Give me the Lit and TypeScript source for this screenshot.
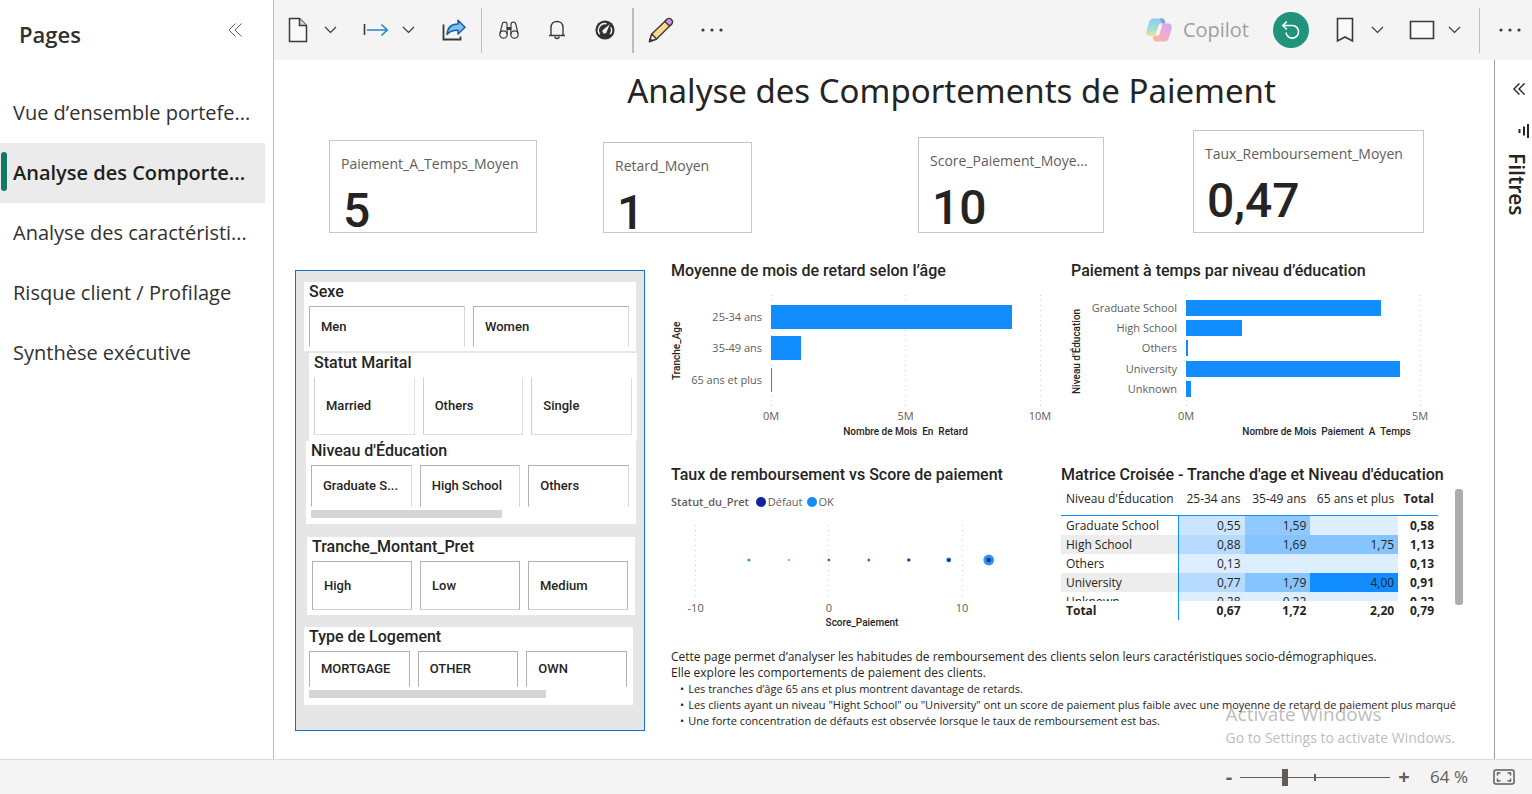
import { LitElement, html, svg, css, nothing } from "lit";
import { customElement, property, state } from "lit/decorators.js";
import { classMap } from "lit/directives/class-map.js";

const SANS = css`"Open Sans", "Noto Sans", sans-serif`;
const DIN = css`Roboto, "Open Sans", sans-serif`;

/* ---------- icons ---------- */

const chevron = html`<svg width="13" height="8" viewBox="0 0 13 8" fill="none" stroke="#3b3a39" stroke-width="1.2"><path d="M1 1 6.5 6.5 12 1" /></svg>`;

const fileIcon = html`<svg width="20" height="26" viewBox="0 0 20 26" fill="#fafafa" stroke="#3b3a39" stroke-width="1.5">
  <path d="M1.5 1.5H11.5L18.5 8.5V24.5H1.5Z" /><path d="M11.5 1.5V8.5H18.5" fill="#d8d8d8" /></svg>`;

const arrowIcon = html`<svg width="26" height="14" viewBox="0 0 26 14" fill="none" stroke="#1e88c9" stroke-width="1.6">
  <path d="M1.5 1V12" stroke="#3b3a39" /><path d="M4 7H24M18.5 1.5 24.2 7 18.5 12.5" /></svg>`;

const shareIcon = html`<svg width="24" height="22" viewBox="0 0 24 22" fill="none">
  <path d="M1.5 5.5V20.5H18.5V17.5" stroke="#3b3a39" stroke-width="1.8" />
  <path d="M5 15.5C5.5 8.5 9.5 5 16 5V1.3L23 8.2 16 15V11.2C11 11 7.800 12 5 15.5Z" fill="#83beec" stroke="#1160a8" stroke-width="1.5" stroke-linejoin="round" /></svg>`;

const binocularsIcon = html`<svg width="20" height="18" viewBox="0 0 20 18" fill="none" stroke="#3b3a39" stroke-width="1.2">
  <circle cx="4.500" cy="13.500" r="3.700" /><circle cx="15.500" cy="13.500" r="3.700" />
  <path d="M1 12.500 3.300 2.800C3.700.5 7.700.5 8 2.800L8.200 13.500M19 12.500 16.700 2.800C16.300.5 12.300.5 12 2.800L11.800 13.500" />
  <path d="M8.300 6.500H11.700V8.500H8.300Z" fill="#3b3a39" /></svg>`;

const bellIcon = html`<svg width="18" height="20" viewBox="0 0 18 20" fill="none" stroke="#3b3a39" stroke-width="1.4">
  <path d="M1 15.5H17M3 15.3V7.5C3 3.8 5.5 1.5 9 1.5S15 3.8 15 7.5V15.3" /><path d="M6.8 16.5C7 19.2 11 19.2 11.2 16.5" /></svg>`;

const gaugeIcon = html`<svg width="20" height="20" viewBox="0 0 20 20" fill="none">
  <circle cx="10" cy="10" r="9.6" fill="#323130" />
  <path d="M4.8 14.2A6.6 6.6 0 0 1 11.5 3.7M15.8 7.2A6.6 6.6 0 0 1 15.2 14.2" stroke="#f4f4f4" stroke-width="1.4" />
  <path d="M14.8 4.2 11.8 11.6A2.2 2.2 0 1 1 8.4 9.5Z" fill="#f4f4f4" /></svg>`;

const pencilIcon = html`<svg width="26" height="26" viewBox="0 0 26 26" stroke="#3b3a39" stroke-width="1.4" stroke-linejoin="round">
  <path d="M1.5 24.5 3.8 17 18.8 2.5 23.5 7.2 8.5 22Z" fill="#ffd987" />
  <path d="M1.5 24.5 3.8 17 8.5 22Z" fill="#fff" />
  <path d="M16.8 4.5 19 2.3C20.3 1 22 1 23.4 2.5S25 5.5 23.7 6.9L21.5 9.1Z" fill="#d893dc" />
  <path d="M1.5 24.5 2.3 21.8 4 23.7Z" fill="#3b3a39" /></svg>`;

const dotsIcon = html`<svg width="24" height="6" viewBox="0 0 24 6" fill="#3b3a39"><circle cx="3" cy="3" r="1.6" /><circle cx="12" cy="3" r="1.6" /><circle cx="21" cy="3" r="1.6" /></svg>`;

const copilotIcon = html`<svg width="26" height="24" viewBox="0 0 26 24">
  <defs>
    <linearGradient id="cl" x1="0" y1="0" x2="0" y2="1"><stop offset="0" stop-color="#8ccbf3" /><stop offset=".55" stop-color="#9fdfd4" /><stop offset="1" stop-color="#f0e58d" /></linearGradient>
    <linearGradient id="cr" x1="1" y1="0" x2="0" y2="1"><stop offset="0" stop-color="#c9a8f0" /><stop offset=".5" stop-color="#f0abd2" /><stop offset="1" stop-color="#fbb795" /></linearGradient>
  </defs>
  <path d="M7.5.5H16C18.5.5 18.5 3 19.3 5.5H15.5C13 5.5 12.3 8 11.5 11L10 15.5C9.2 17.5 8 18.3 6 18.3H4C.5 18.3-.3 15.5.6 12.5L3.2 4C4 1.5 5 .5 7.5.5Z" fill="url(#cl)" />
  <path d="M14 .5H16.2C18.5.5 18.8 3 19.5 5.5H17C15.2 5.5 14.8 2.5 14 .5Z" fill="#7d9fe8" />
  <path d="M18.5 23.5H10C7.5 23.5 7.3 21 6.7 18.5C9.5 18.3 10.3 17.5 11 15.5L13.5 8C14.2 6 15.5 5.6 17.5 5.6H22C25.5 5.6 26.3 8.5 25.4 11.5L22.8 20C22 22.5 21 23.5 18.5 23.5Z" fill="url(#cr)" />
  <path d="M13.2 6.5H16.5L13 17.5H9.8Z" fill="#f7f4f8" /></svg>`;

const resetIcon = html`<svg width="20" height="20" viewBox="0 0 20 20" fill="none" stroke="#fff" stroke-width="1.6">
  <path d="M2 5.5H11.5A6.3 6.3 0 1 1 5 12.5" /><path d="M5.8 1.5 1.8 5.5 5.8 9.5" /></svg>`;

const bookmarkIcon = html`<svg width="18" height="26" viewBox="0 0 18 26" fill="#fafafa" stroke="#3b3a39" stroke-width="1.6"><path d="M1.5 1.5H16.5V24L9 20 1.5 24Z" /></svg>`;

const viewIcon = html`<svg width="26" height="20" viewBox="0 0 26 20" fill="#fafafa" stroke="#3b3a39" stroke-width="1.6"><path d="M1.5 1.5H24.5V18.5H1.5Z" /></svg>`;

const doubleChevron = (size: number, stroke: string, w: number) =>
  html`<svg width=${size} height=${size} viewBox="0 0 14 14" fill="none" stroke=${stroke} stroke-width=${w}><path d="M7.5.5 1 7 7.5 13.5M13.5.5 7 7 13.5 13.5" /></svg>`;

const filterIcon = html`<svg width="13" height="14" viewBox="0 0 13 14" fill="none" stroke="#252423" stroke-width="2"><path d="M11 0V14M7 2.5V11.5M2.500 5V9" /></svg>`;

const fitIcon = html`<svg width="22" height="16" viewBox="0 0 22 16" fill="none" stroke="#605e5c" stroke-width="1.5">
  <rect x="1" y="1" width="20" height="14" rx="2" /><path d="M4.5 6.5V4H7.5M14.5 4H17.5V6.5M17.5 9.5V12H14.5M7.5 12H4.5V9.5" /></svg>`;

/* ---------- horizontal bar chart ---------- */

interface Bar { label: string; value: number }

@customElement("bar-chart")
export class BarChart extends LitElement {
  @property() heading = "";
  @property() yTitle = "";
  @property() xTitle = "";
  @property({ type: Number }) max = 10;
  @property({ attribute: false }) ticks: number[] = [];
  @property({ attribute: false }) bars: Bar[] = [];

  static styles = css`
    :host { display: block; font-family: ${SANS}; }
    h2 { margin: 0 0 14px; font: 500 16px/20px ${DIN}; color: #252423; white-space: nowrap; }
    .body { display: grid; grid-template-columns: 12px auto 1fr; }
    .y-title { writing-mode: vertical-rl; transform: rotate(180deg); text-align: center; font: 500 10px/12px ${DIN}; color: #252423; white-space: nowrap; }
    .labels, .bars { display: grid; grid-auto-rows: 1fr; box-sizing: border-box; height: 112px; padding: var(--plot-pad, 6px 0 11px); }
    .labels { width: var(--label-width, 88px); padding-right: 9px; justify-items: end; align-items: center; font-size: 11px; line-height: 16px; color: #605e5c; white-space: nowrap; }
    .plot { display: grid; }
    .plot > * { grid-area: 1 / 1; }
    .bars { align-items: center; }
    .bar { height: var(--bar-height, 24px); background: #118dff; }
    svg { display: block; width: 100%; height: 112px; overflow: visible; }
    line { stroke: #d2d0ce; stroke-width: 1; stroke-dasharray: 1 4; shape-rendering: crispEdges; }
    text { fill: #605e5c; font-size: 11px; text-anchor: middle; }
    .x-title { grid-column: 3; margin: 19px 0 0; text-align: center; font: 500 10px/12px ${DIN}; color: #252423; white-space: pre; }
  `;

  render() {
    return html`
      <h2>${this.heading}</h2>
      <div class="body">
        <div class="y-title">${this.yTitle}</div>
        <div class="labels">${this.bars.map((b) => html`<span>${b.label}</span>`)}</div>
        <div class="plot">
          <svg>
            ${this.ticks.map((t) => {
              const x = `${(t / this.max) * 100}%`;
              return svg`<line x1=${x} x2=${x} y1="0" y2="112" /><text x=${x} y="125">${t}M</text>`;
            })}
          </svg>
          <div class="bars">
            ${this.bars.map((b) => html`<div class="bar" style="width:${(b.value / this.max) * 100}%"></div>`)}
          </div>
        </div>
        <p class="x-title">${this.xTitle}</p>
      </div>`;
  }
}

/* ---------- scatter chart ---------- */

@customElement("score-scatter")
export class ScoreScatter extends LitElement {
  static styles = css`
    :host { display: block; font-family: ${SANS}; }
    h2 { margin: 0 0 9px; font: 500 16px/20px ${DIN}; color: #252423; white-space: nowrap; }
    .legend { display: flex; align-items: center; gap: 2px; font-size: 11px; line-height: 16px; color: #605e5c; }
    .legend b { font-weight: 600; margin-right: 5px; }
    .legend span { margin-right: 2px; }
    .dot { width: 10px; height: 10px; border-radius: 50%; background: #118dff; }
    .dot.late { background: #12239e; }
    .plot { margin: 15px 1px 0 9px; }
    svg { display: block; width: 100%; height: 73px; overflow: visible; }
    line { stroke: #d2d0ce; stroke-width: 1; stroke-dasharray: 1 4; shape-rendering: crispEdges; }
    text { fill: #605e5c; font-size: 11px; text-anchor: middle; }
    .x-title { margin: 19px 0 0; text-align: center; font: 500 10px/12px ${DIN}; color: #252423; }
  `;

  private x(v: number) {
    return `${40.9 + v * 3.66}%`;
  }

  render() {
    const points = [
      { v: -6, r: 1.5, inner: 0 }, { v: -3, r: 0.9, inner: 0 }, { v: 0, r: 1.5, inner: 0.7 },
      { v: 3, r: 1.5, inner: 0.7 }, { v: 6, r: 1.8, inner: 1.3 }, { v: 9, r: 2.4, inner: 1.8 }, { v: 12, r: 5.4, inner: 2.3 },
    ];
    return html`
      <h2>Taux de remboursement vs Score de paiement</h2>
      <div class="legend"><b>Statut_du_Pret</b><i class="dot late"></i><span>Défaut</span><i class="dot"></i><span>OK</span></div>
      <div class="plot">
        <svg>
          ${[-10, 0, 10].map((t) => svg`<line x1=${this.x(t)} x2=${this.x(t)} y1="0" y2="73" /><text x=${this.x(t)} y="87">${t}</text>`)}
          ${points.map((p) => svg`<circle cx=${this.x(p.v)} cy="35" r=${p.r} fill="#2f93f5" />
            ${p.inner ? svg`<circle cx=${this.x(p.v)} cy="35" r=${p.inner} fill="#12309e" />` : nothing}`)}
        </svg>
        <p class="x-title">Score_Paiement</p>
      </div>`;
  }
}

/* ---------- slicers ---------- */

@customElement("tile-slicer")
export class TileSlicer extends LitElement {
  @property() heading = "";
  @property({ attribute: false }) options: string[] = [];
  @property({ type: Number }) scroll = 0;

  static styles = css`
    :host { display: block; background: #fff; padding-left: 5px; }
    h2 { margin: 0 0 4px; font: 500 16px/20px ${DIN}; color: #252423; }
    .tiles { display: grid; grid-auto-flow: column; grid-auto-columns: 1fr; gap: 8px; height: var(--tile-height, 41px); }
    button {
      display: flex; align-items: center; min-width: 0; padding: 0 0 0 11px; background: #fff; border: 1px solid #b3b0ad;
      border-top-color: var(--tile-top, #b3b0ad); border-right-color: var(--tile-side, #d8d6d4); border-bottom-color: var(--tile-bottom, transparent);
      border-left-color: var(--tile-left, #b3b0ad);
      font: 500 13px/20px ${DIN}; color: #252423; text-align: left; white-space: nowrap;
    }
    .bar { height: 8px; margin-top: 3px; background: #d6d6d6; }
  `;

  render() {
    return html`
      <h2>${this.heading}</h2>
      <div class="tiles">${this.options.map((o) => html`<button type="button"><span>${o}</span></button>`)}</div>
      ${this.scroll ? html`<div class="bar" style="width:${this.scroll}%"></div>` : nothing}`;
  }
}

/* ---------- matrix ---------- */

@customElement("cross-matrix")
export class CrossMatrix extends LitElement {
  static styles = css`
    :host { display: block; font-family: ${SANS}; color: #252423; }
    h2 { margin: 0 0 4px; font: 500 16px/20px ${DIN}; white-space: nowrap; }
    .wrap { display: flex; align-items: flex-start; }
    table { flex: 1; min-width: 0; border-collapse: collapse; table-layout: fixed; font-size: 12px; line-height: 18px; }
    .c-name { width: 118px; } .c-num { width: 66px; } .c-wide { width: 88px; } .c-total { width: 40px; }
    th, td { padding: 1px 4px 0 0; text-align: right; font-weight: 400; white-space: nowrap; }
    thead th { line-height: 20px; padding-top: 0; padding-bottom: 6px; border-bottom: 1px solid #118dff; }
    th:first-child { text-align: left; padding-left: 5px; padding-right: 0; }
    tbody th, tfoot th { border-right: 1px solid #118dff; }
    tbody tr:nth-child(even) th { background: #ededed; }
    td:last-child, th:last-child, tfoot th, tfoot td { font-weight: 700; }
    .h0 { background: #dceeff; } .h1 { background: #cbe5ff; } .h2 { background: #b6dbff; }
    .h3 { background: #90c9ff; } .h4 { background: #86c4ff; } .h5 { background: #118dff; }
    .cut { height: 8px; overflow: hidden; }
    .thumb { width: 8px; height: 116px; margin: 0 7px 0 17px; border-radius: 3px; background: #adadad; }
  `;

  private rows = [
    { name: "Graduate School", cells: [["0,55", 1], ["1,59", 3], ["", 0]], total: "0,58" },
    { name: "High School", cells: [["0,88", 2], ["1,69", 4], ["1,75", 4]], total: "1,13" },
    { name: "Others", cells: [["0,13", 0], ["", 0], ["", 0]], total: "0,13" },
    { name: "University", cells: [["0,77", 2], ["1,79", 4], ["4,00", 5]], total: "0,91" },
    { name: "Unknown", cells: [["0,28", 0], ["0,22", 0], ["", 0]], total: "0,22" },
  ];

  render() {
    return html`
      <h2 id="title">Matrice Croisée - Tranche d'age et Niveau d'éducation</h2>
      <div class="wrap">
        <table aria-labelledby="title">
          <colgroup><col class="c-name" /><col class="c-num" /><col class="c-num" /><col class="c-wide" /><col class="c-total" /></colgroup>
          <thead><tr><th>Niveau d'Éducation</th><th>25-34 ans</th><th>35-49 ans</th><th>65 ans et plus</th><th>Total</th></tr></thead>
          <tbody>
            ${this.rows.map((r, i) => {
              const cut = i === this.rows.length - 1 ? "cut" : "";
              return html`<tr>
                <th><div class=${cut}>${r.name}</div></th>
                ${r.cells.map(([v, h]) => html`<td class="h${h}"><div class=${cut}>${v}</div></td>`)}
                <td><div class=${cut}>${r.total}</div></td>
              </tr>`;
            })}
          </tbody>
          <tfoot><tr><th>Total</th><td>0,67</td><td>1,72</td><td>2,20</td><td>0,79</td></tr></tfoot>
        </table>
        <div class="thumb"></div>
      </div>`;
  }
}

/* ---------- application shell ---------- */

@customElement("app-root")
export class AppRoot extends LitElement {
  @state() private page = 1;

  static styles = css`
    :host { display: block; font-family: ${SANS}; color: #252423; background: #fff; }
    * { box-sizing: border-box; }
    button { font: inherit; color: inherit; background: none; border: 0; padding: 0; cursor: pointer; }
    svg { display: block; }
    .shell { display: grid; grid-template: 1fr auto / 274px 1fr; min-height: 100vh; }

    .sidebar { border-right: 1px solid #bebbb8; }
    .side-head { display: flex; justify-content: space-between; align-items: flex-start; padding: 19px 31px 0 19px; height: 83px; }
    .side-head h2 { margin: 0; font-size: 22px; font-weight: 600; line-height: 30px; color: #323130; }
    .side-head button { padding: 4px 0; }
    nav { display: flex; flex-direction: column; margin-right: 8px; }
    nav a { position: relative; padding-left: 13px; font-size: 20px; line-height: 60px; color: #323130; text-decoration: none; white-space: nowrap; overflow: hidden; }
    nav a.active { background: #ebebeb; color: #201f1e; font-weight: 600; }
    nav a.active::before { content: ""; position: absolute; left: 1px; top: 9px; width: 6px; height: 39px; border-radius: 3px; background: #117865; }

    .main { display: grid; grid-template-rows: 60px 1fr; min-width: 0; }
    .toolbar { display: flex; align-items: center; background: #f4f4f4; padding: 0 10px 0 12px; }
    .group { display: flex; align-items: center; gap: 8px; }
    .left { display: flex; align-items: center; gap: 22px; }
    .set { display: flex; align-items: center; gap: 24px; }
    .icon { display: flex; justify-content: center; align-items: center; width: 24px; height: 36px; }
    .icon svg { flex: none; }
    .sep { width: 1px; height: 45px; background: #bebbb8; margin: 0 15px; }
    .thick { width: 2px; }
    .more { margin-left: 27px; }
    .copilot { display: flex; align-items: center; gap: 11px; margin-left: auto; margin-right: 24px; font-size: 20px; line-height: 28px; color: #a19f9d; }
    .reset { display: grid; place-items: center; width: 36px; height: 36px; margin-right: 24px; border-radius: 50%; background: #20937c; }
    .view { margin-left: 21px; }
    .end-sep { margin: 0 18px 0 13px; }

    .stage { display: grid; grid-template-columns: 1fr 38px; }
    .report { position: relative; padding: 8px 24px 0 21px; min-width: 0; }
    h1 { margin: 0; padding-left: 138px; text-align: center; font: 400 33px/46px "Noto Sans", sans-serif; }
    .cards { display: grid; grid-template-columns: 208fr 66fr 149fr 166fr 186fr 89fr 231fr; align-items: end; margin: 16px 46px 0 34px; }
    .card { padding: 13px 11px 0; border: 1px solid #c8c6c4; overflow: hidden; }
    .card:nth-child(1) { grid-column: 1; height: 93px; }
    .card:nth-child(2) { grid-column: 3; height: 91px; }
    .card:nth-child(3) { grid-column: 5; height: 96px; }
    .card:nth-child(4) { grid-column: 7; height: 103px; }
    .card p { margin: 0; font-size: 14px; line-height: 20px; color: #605e5c; white-space: nowrap; }
    .card strong { display: block; margin-top: 9px; padding-left: 2px; font: 500 48px/56px ${DIN}; }

    .content { display: grid; grid-template-columns: 350fr 799fr; gap: 26px; align-items: start; margin-top: 28px; }
    .slicers { margin-top: 9px; padding: 11px 0 25px; border: 1px solid #1a6fc0; background: #e6e6e6; }
    .sex { margin: 0 8px; padding-bottom: 4px; padding-right: 7px; }
    .marital { margin: 2px 7px 0 13px; padding-bottom: 6px; padding-right: 5px; --tile-height: 58px; --tile-top: transparent; --tile-left: #d2d0ce; --tile-side: #e1dfdd; --tile-bottom: #e1dfdd; }
    .education { margin: 0 8px 0 10px; padding-bottom: 6px; padding-right: 7px; --tile-height: 42px; }
    .amount { margin: 13px 9px 0 11px; padding-bottom: 5px; padding-right: 7px; --tile-height: 49px; --tile-side: #b3b0ad; --tile-bottom: #d2d0ce; }
    .housing { margin: 12px 11px 0 8px; padding-bottom: 7px; padding-right: 6px; --tile-height: 36px; --tile-side: #b3b0ad; }

    .visuals { display: grid; grid-template-columns: 374fr 409fr; column-gap: 16px; min-width: 0; }
    .visuals > * { min-width: 0; }
    .age { padding-right: 5px; }
    .school { padding: 0 3px 0 10px; --label-width: 103px; --bar-height: 16px; --plot-pad: 3px 0 8px; }
    score-scatter, cross-matrix { margin-top: 27px; }
    .notes { grid-column: 1 / -1; margin-top: 20px; font-size: 12px; line-height: 16px; white-space: nowrap; }
    .notes p { margin: 0; }
    .notes ul { margin: 0; padding: 0; list-style: none; font-size: 11px; }
    .notes li { display: flex; padding-left: 9px; gap: 4px; }
    .notes li::before { content: "•"; }

    .watermark { position: absolute; right: 39px; bottom: 10px; font-size: 14px; line-height: 22px; color: rgba(150, 150, 150, 0.65); white-space: nowrap; pointer-events: none; }
    .watermark b { display: block; font-size: 19px; line-height: 25px; font-weight: 400; }

    .rail { display: flex; flex-direction: column; align-items: flex-end; padding: 22px 2px 0 0; border-left: 1px solid #a19f9d; }
    .rail button { display: flex; flex-direction: column; align-items: flex-end; }
    .rail .open { padding: 1px 5px 0 0; margin-bottom: 29px; }
    .rail span { margin-top: 15px; writing-mode: vertical-rl; font-size: 21px; font-weight: 600; line-height: 26px; }

    .status { grid-column: 1 / -1; display: flex; align-items: center; justify-content: flex-end; height: 35px; padding-right: 17px; border-top: 1px solid #dcdad8; background: #f4f4f4; color: #605e5c; }
    .step { width: 14px; font-size: 20px; font-weight: 700; line-height: 20px; text-align: center; }
    .zoom {
      appearance: none; width: 150px; height: 17px; margin: 0 7px 0 4px;
      background: linear-gradient(#605e5c, #605e5c) center / 100% 1px no-repeat, linear-gradient(#605e5c, #605e5c) center / 2px 7px no-repeat;
    }
    .zoom::-webkit-slider-thumb { appearance: none; width: 6px; height: 17px; background: #605e5c; }
    .percent { margin: 0 25px 0 19px; font-size: 17px; line-height: 24px; }
  `;

  private pages = [
    "Vue d’ensemble portefe...",
    "Analyse des Comporte...",
    "Analyse des caractéristi...",
    "Risque client / Profilage",
    "Synthèse exécutive",
  ];

  private cards = [
    ["Paiement_A_Temps_Moyen", "5"],
    ["Retard_Moyen", "1"],
    ["Score_Paiement_Moye...", "10"],
    ["Taux_Remboursement_Moyen", "0,47"],
  ];

  private icon(label: string, glyph: unknown, extra = "") {
    return html`<button type="button" class="icon ${extra}" aria-label=${label}>${glyph}</button>`;
  }

  private renderToolbar() {
    return html`<header class="toolbar">
      <div class="left">
        <div class="group">${this.icon("Fichier", fileIcon)}${this.icon("Options de fichier", chevron)}</div>
        <div class="group">${this.icon("Exporter", arrowIcon)}${this.icon("Options d’export", chevron)}</div>
        ${this.icon("Partager", shareIcon)}
      </div>
      <i class="sep"></i>
      <div class="set">${this.icon("Explorer", binocularsIcon)}${this.icon("Alertes", bellIcon)}${this.icon("Métriques", gaugeIcon)}</div>
      <i class="sep thick"></i>
      ${this.icon("Modifier", pencilIcon)}
      ${this.icon("Plus", dotsIcon, "more")}
      <button type="button" class="copilot">${copilotIcon}<span>Copilot</span></button>
      <button type="button" class="reset" aria-label="Réinitialiser">${resetIcon}</button>
      <div class="group">${this.icon("Signets", bookmarkIcon)}${this.icon("Options des signets", chevron)}</div>
      <div class="group view">${this.icon("Affichage", viewIcon)}${this.icon("Options d’affichage", chevron)}</div>
      <i class="sep end-sep"></i>
      ${this.icon("Autres options", dotsIcon)}
    </header>`;
  }

  private renderReport() {
    return html`<main class="report">
      <h1>Analyse des Comportements de Paiement</h1>
      <section class="cards">
        ${this.cards.map(([label, value]) => html`<article class="card"><p>${label}</p><strong>${value}</strong></article>`)}
      </section>
      <div class="content">
        <section class="slicers">
          <tile-slicer class="sex" heading="Sexe" .options=${["Men", "Women"]}></tile-slicer>
          <tile-slicer class="marital" heading="Statut Marital" .options=${["Married", "Others", "Single"]}></tile-slicer>
          <tile-slicer class="education" heading="Niveau d'Éducation" scroll="60" .options=${["Graduate S...", "High School", "Others"]}></tile-slicer>
          <tile-slicer class="amount" heading="Tranche_Montant_Pret" .options=${["High", "Low", "Medium"]}></tile-slicer>
          <tile-slicer class="housing" heading="Type de Logement" scroll="74.5" .options=${["MORTGAGE", "OTHER", "OWN"]}></tile-slicer>
        </section>
        <section class="visuals">
          <bar-chart class="age" heading="Moyenne de mois de retard selon l’âge" yTitle="Tranche_Age" xTitle="Nombre de Mois  En  Retard"
            max="10" .ticks=${[0, 5, 10]}
            .bars=${[{ label: "25-34 ans", value: 8.95 }, { label: "35-49 ans", value: 1.1 }, { label: "65 ans et plus", value: 0.03 }]}></bar-chart>
          <bar-chart class="school" heading="Paiement à temps par niveau d’éducation" yTitle="Niveau d'Éducation" xTitle="Nombre de Mois  Paiement  A  Temps"
            max="6" .ticks=${[0, 5]}
            .bars=${[{ label: "Graduate School", value: 4.17 }, { label: "High School", value: 1.19 }, { label: "Others", value: 0.04 }, { label: "University", value: 4.58 }, { label: "Unknown", value: 0.1 }]}></bar-chart>
          <score-scatter></score-scatter>
          <cross-matrix></cross-matrix>
          <div class="notes">
            <p>Cette page permet d’analyser les habitudes de remboursement des clients selon leurs caractéristiques socio-démographiques.</p>
            <p>Elle explore les comportements de paiement des clients.</p>
            <ul>
              <li>Les tranches d’âge 65 ans et plus montrent davantage de retards.</li>
              <li>Les clients ayant un niveau "Hight School" ou "University" ont un score de paiement plus faible avec une moyenne de retard de paiement plus marqué</li>
              <li>Une forte concentration de défauts est observée lorsque le taux de remboursement est bas.</li>
            </ul>
          </div>
        </section>
      </div>
      <div class="watermark"><b>Activate Windows</b>Go to Settings to activate Windows.</div>
    </main>`;
  }

  render() {
    return html`<div class="shell">
      <aside class="sidebar">
        <div class="side-head"><h2>Pages</h2><button type="button" aria-label="Réduire">${doubleChevron(14, "#605e5c", 1)}</button></div>
        <nav>
          ${this.pages.map((p, i) => html`<a href="#" class=${classMap({ active: i === this.page })}
            @click=${(e: Event) => { e.preventDefault(); this.page = i; }}>${p}</a>`)}
        </nav>
      </aside>
      <div class="main">
        ${this.renderToolbar()}
        <div class="stage">
          ${this.renderReport()}
          <aside class="rail">
            <button type="button" class="open" aria-label="Développer">${doubleChevron(12, "#252423", 1.6)}</button>
            <button type="button">${filterIcon}<span>Filtres</span></button>
          </aside>
        </div>
      </div>
      <footer class="status">
        <button type="button" class="step" aria-label="Zoom arrière">-</button>
        <input class="zoom" type="range" min="0" max="100" value="29" aria-label="Zoom" />
        <button type="button" class="step" aria-label="Zoom avant">+</button>
        <span class="percent">64 %</span>
        <button type="button" aria-label="Ajuster à la page">${fitIcon}</button>
      </footer>
    </div>`;
  }
}
